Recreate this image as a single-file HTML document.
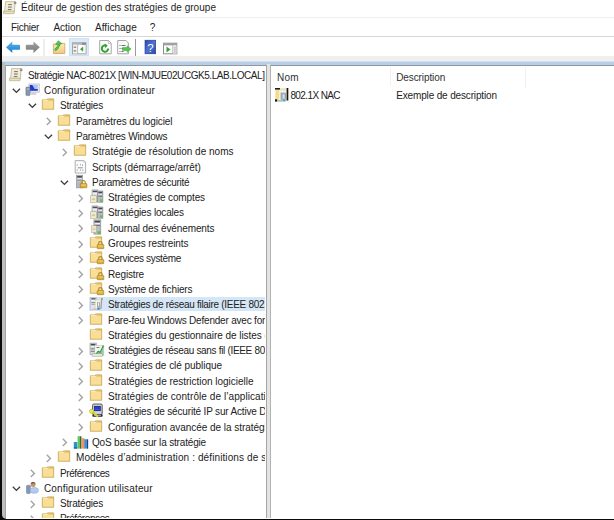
<!DOCTYPE html><html><head><meta charset="utf-8"><style>
html,body{margin:0;padding:0;width:614px;height:520px;overflow:hidden;background:#fff}
*{box-sizing:border-box}
body{position:relative;font-family:"Liberation Sans",sans-serif;font-size:10.0px;color:#222}
.a{position:absolute}
.t{position:absolute;white-space:pre;line-height:12px;height:12px}
.ic{position:absolute;line-height:0}
.ic svg{display:block}
</style></head><body>
<div class="a" style="left:0;top:0;width:2px;height:520px;background:#0b0b0b"></div>
<div class="a" style="left:0;top:518.5px;width:614px;height:1.5px;background:#0b0b0b"></div>
<svg class="a" style="left:3px;top:-1px" width="16" height="16" viewBox="0 -13 16 16"><path d="M2.6 -10.4H12.2L11.3 0H1.5Z" fill="#f0ebd4" stroke="#bfb592" stroke-width="0.8"/><path d="M0.6 -0.8H11.4L11 1.7H0.4Z" fill="#e7e0c2" stroke="#b9ae88" stroke-width="0.7"/><circle cx="12.2" cy="-9.1" r="1.3" fill="#8e8e8e"/><path d="M5.2 -7.4H8.8M5 -4.9H8.6M4.8 -2.4H8.4" stroke="#6e6e6e" stroke-width="1"/><path d="M5 -4.9H8.6" stroke="#a8a8a8" stroke-width="1"/></svg>
<div class="t" style="left:21px;top:2.10px;letter-spacing:0.036px;color:#1e1e1e;">Éditeur de gestion des stratégies de groupe</div>
<div class="a" style="left:2px;top:17px;width:612px;height:1px;background:#efefef"></div>
<div class="t" style="left:11px;top:21.50px;letter-spacing:-0.288px;">Fichier</div>
<div class="t" style="left:53.4px;top:21.50px;letter-spacing:-0.033px;">Action</div>
<div class="t" style="left:95px;top:21.50px;letter-spacing:0.032px;">Affichage</div>
<div class="t" style="left:149.7px;top:21.50px;letter-spacing:-1.662px;">?</div>
<div class="a" style="left:2px;top:36px;width:612px;height:1px;background:#d6d6d6"></div>
<div class="a" style="left:69px;top:38px;width:20px;height:18px;background:#d9eaf9;border:1px solid #cde3f6"></div>
<svg class="a" style="left:0;top:37px" width="200" height="19" viewBox="0 37 200 19">
<defs>
<linearGradient id="gb" x1="0" y1="0" x2="0" y2="1"><stop offset="0" stop-color="#5ab8ee"/><stop offset="1" stop-color="#1b78cc"/></linearGradient>
<linearGradient id="gg" x1="0" y1="0" x2="0" y2="1"><stop offset="0" stop-color="#a0a0a0"/><stop offset="1" stop-color="#7c7c7c"/></linearGradient>
<linearGradient id="gf" x1="0" y1="0" x2="0" y2="1"><stop offset="0" stop-color="#f9eeb0"/><stop offset="1" stop-color="#f2c886"/></linearGradient>
<linearGradient id="gh" x1="0" y1="0" x2="1" y2="1"><stop offset="0" stop-color="#2a48a8"/><stop offset="0.5" stop-color="#4d73d6"/><stop offset="1" stop-color="#2a45a0"/></linearGradient>
</defs>
<path d="M6 47.3L12.3 41.6V44.8H19.2Q20 44.8 20 45.6V48.9Q20 49.7 19.2 49.7H12.3V53Z" fill="url(#gb)"/>
<path d="M39.8 47.3L33.5 41.6V44.8H26.6Q25.8 44.8 25.8 45.6V48.9Q25.8 49.7 26.6 49.7H33.5V53Z" fill="url(#gg)"/>
<rect x="43.5" y="39" width="1" height="17" fill="#dedede"/>
<path d="M53.4 44H60.5L61.3 43.4H64.8V53.5H53.4Z" fill="url(#gf)" stroke="#c6a65e" stroke-width="0.8"/>
<path d="M54.9 50.3Q57.6 48.6 59.4 44.3" fill="none" stroke="#2f9a2f" stroke-width="2.3"/>
<path d="M54.9 50.3Q57.6 48.6 59.4 44.3" fill="none" stroke="#5ad05a" stroke-width="1.2"/>
<path d="M55.6 44.6L58.3 40.8L62 43.8Z" fill="#55cc55" stroke="#2f9a2f" stroke-width="0.6"/>
<rect x="72.5" y="42.8" width="13.5" height="11" fill="#fff" stroke="#9c9c9c" stroke-width="0.9"/>
<rect x="72.5" y="42.8" width="13.5" height="2" fill="#b4b4b4"/>
<rect x="82" y="42.8" width="4" height="2" fill="#8a8a8a"/>
<rect x="73" y="44.8" width="4.3" height="8.6" fill="#f2f2f2"/>
<rect x="73.6" y="46.4" width="2.6" height="1.6" fill="#9a9a9a"/>
<rect x="73.6" y="50" width="2.6" height="1.6" fill="#9a9a9a"/>
<rect x="77.3" y="44.8" width="0.8" height="8.6" fill="#a8a8a8"/>
<path d="M83.2 46.6L80 49.2L83.2 51.8Z" fill="#3aa33a"/>
<rect x="84.8" y="44.8" width="0.9" height="8.6" fill="#f1d3e2"/>
<path d="M99.7 40.5H108.5L111.2 43.2V53.8H99.7Z" fill="#fff" stroke="#a6a6a6" stroke-width="1"/>
<path d="M108.3 40.5V43.4H111.2" fill="none" stroke="#b8b8b8" stroke-width="0.8"/>
<path d="M108.2 48.6A3.2 3.2 0 1 1 106.3 45.6" fill="none" stroke="#2fa32f" stroke-width="2"/>
<path d="M104.6 43.6L107.8 45.7L105 47.9Z" fill="#2fa32f"/>
<path d="M117.7 40.5H126L128.4 43V53.8H117.7Z" fill="#fafafa" stroke="#a6a6a6" stroke-width="1"/>
<path d="M119.5 45.5h1M121.5 45.5h4M119.5 48.5h1M121.5 48.5h2M119.5 51.5h1M121.5 51.5h2" stroke="#707070" stroke-width="1"/>
<path d="M122.5 47.6H127.2V45.8L131 49L127.2 52.2V50.4H122.5Z" fill="#55c84a" stroke="#3a9a3a" stroke-width="0.5"/>
<rect x="135" y="39" width="1" height="17" fill="#9a9a9a"/>
<rect x="145" y="40.2" width="10.7" height="13.6" fill="url(#gh)" stroke="#1f3a90" stroke-width="0.6"/>
<text x="150.4" y="51.8" font-family="Liberation Sans" font-size="11.5" fill="#fff" text-anchor="middle">?</text>
<rect x="163.5" y="43.2" width="13.3" height="10.6" fill="#fff" stroke="#8e8e8e" stroke-width="1"/>
<rect x="163.5" y="43.2" width="13.3" height="2.2" fill="#a0a0a0"/>
<path d="M166.5 46.5L170.5 49.5L166.5 52.5Z" fill="#3aa03a"/>
<rect x="172.5" y="45.4" width="0.8" height="8.2" fill="#9a9a9a"/>
<rect x="173.3" y="45.4" width="3.2" height="8.2" fill="#e6e6e6"/>
<path d="M174.9 47.5v0.8M174.9 49.5v0.8M174.9 51.5v0.8" stroke="#666" stroke-width="0.9"/>
</svg>
<div class="a" style="left:2px;top:56px;width:612px;height:5px;background:#efefef"></div>
<div class="a" style="left:2px;top:61px;width:612px;height:1px;background:#d3e2ef"></div>
<div class="a" style="left:5px;top:62px;width:609px;height:3px;background:#b6cee6"></div>
<div class="a" style="left:5px;top:65px;width:609px;height:1px;background:#8e98a3"></div>
<div class="a" style="left:2px;top:62px;width:3px;height:456px;background:#bdbdbd"></div>
<div class="a" style="left:5px;top:65px;width:1px;height:453px;background:#a2a2a2"></div>
<div class="a" style="left:266px;top:65px;width:1px;height:453px;background:#a6a6a6"></div>
<div class="a" style="left:267px;top:64px;width:3px;height:454px;background:#e3e3e3"></div>
<div class="a" style="left:270px;top:65px;width:1px;height:453px;background:#b3b3b3"></div>
<div class="a" style="left:6px;top:66px;width:259px;height:452px;overflow:hidden">
<svg class="a" style="left:3px;top:-0.20px" width="16" height="16" viewBox="0 -13 16 16"><path d="M2.6 -10.4H12.2L11.3 0H1.5Z" fill="#f0ebd4" stroke="#bfb592" stroke-width="0.8"/><path d="M0.6 -0.8H11.4L11 1.7H0.4Z" fill="#e7e0c2" stroke="#b9ae88" stroke-width="0.7"/><circle cx="12.2" cy="-9.1" r="1.3" fill="#8e8e8e"/><path d="M5.2 -7.4H8.8M5 -4.9H8.6M4.8 -2.4H8.4" stroke="#6e6e6e" stroke-width="1"/><path d="M5 -4.9H8.6" stroke="#a8a8a8" stroke-width="1"/></svg>
<div class="t" style="left:22px;top:3.70px;letter-spacing:-0.443px;">Stratégie NAC-8021X [WIN-MJUE02UCGK5.LAB.LOCAL]</div>
<svg class="a" style="left:6.1px;top:21.8px" width="9" height="6" viewBox="0 0 9 6"><path d="M0.8 0.8L4.4 4.4L8 0.8" fill="none" stroke="#3c3c3c" stroke-width="1.35"/></svg>
<svg class="a" style="left:19px;top:15.10px" width="16" height="16" viewBox="0 -13 16 16"><rect x="3.9" y="-10.1" width="10.4" height="8.4" fill="#dfe3e8" stroke="#b5bcc4" stroke-width="0.6"/><rect x="4.8" y="-9.1" width="7.9" height="5.9" fill="#a9c6f5"/><path d="M4.8 -9.1H7.3L9.6 -5H12.7V-3.2H4.8Z" fill="#2836c4"/><path d="M6.1 -1.7H11.3V0.9H6.1Z" fill="#d9cfd9"/><rect x="0.9" y="-6.9" width="4.2" height="8.5" rx="0.8" fill="#8696ad" stroke="#617088" stroke-width="0.5"/><rect x="1.8" y="-5.4" width="2.4" height="0.8" fill="#c8d2e0"/></svg>
<div class="t" style="left:38px;top:19.00px;letter-spacing:0.154px;">Configuration ordinateur</div>
<svg class="a" style="left:22.1px;top:37.1px" width="9" height="6" viewBox="0 0 9 6"><path d="M0.8 0.8L4.4 4.4L8 0.8" fill="none" stroke="#3c3c3c" stroke-width="1.35"/></svg>
<svg class="a" style="left:35px;top:30.40px" width="16" height="16" viewBox="0 -13 16 16"><path d="M6.6 -10.2H12.6V-8.2H6.6Z" fill="#efd48a" stroke="#cfad5c" stroke-width="0.8"/><rect x="1.3" y="-9.1" width="11.4" height="9.3" fill="#f8de97" stroke="#cdab58" stroke-width="0.9"/><path d="M1.9 -8.5H6.8L7.6 -9.4" fill="none" stroke="#fcefc6" stroke-width="0.8"/></svg>
<div class="t" style="left:54px;top:34.30px;letter-spacing:-0.203px;">Stratégies</div>
<svg class="a" style="left:40.3px;top:51.1px" width="6" height="9" viewBox="0 0 6 9"><path d="M0.8 0.8L4.4 4.4L0.8 8" fill="none" stroke="#a2a2a2" stroke-width="1.35"/></svg>
<svg class="a" style="left:51px;top:45.70px" width="16" height="16" viewBox="0 -13 16 16"><path d="M6.6 -10.2H12.6V-8.2H6.6Z" fill="#efd48a" stroke="#cfad5c" stroke-width="0.8"/><rect x="1.3" y="-9.1" width="11.4" height="9.3" fill="#f8de97" stroke="#cdab58" stroke-width="0.9"/><path d="M1.9 -8.5H6.8L7.6 -9.4" fill="none" stroke="#fcefc6" stroke-width="0.8"/></svg>
<div class="t" style="left:70px;top:49.60px;letter-spacing:-0.115px;">Paramètres du logiciel</div>
<svg class="a" style="left:38.1px;top:67.7px" width="9" height="6" viewBox="0 0 9 6"><path d="M0.8 0.8L4.4 4.4L8 0.8" fill="none" stroke="#3c3c3c" stroke-width="1.35"/></svg>
<svg class="a" style="left:51px;top:61.00px" width="16" height="16" viewBox="0 -13 16 16"><path d="M6.6 -10.2H12.6V-8.2H6.6Z" fill="#efd48a" stroke="#cfad5c" stroke-width="0.8"/><rect x="1.3" y="-9.1" width="11.4" height="9.3" fill="#f8de97" stroke="#cdab58" stroke-width="0.9"/><path d="M1.9 -8.5H6.8L7.6 -9.4" fill="none" stroke="#fcefc6" stroke-width="0.8"/></svg>
<div class="t" style="left:70px;top:64.90px;letter-spacing:-0.207px;">Paramètres Windows</div>
<svg class="a" style="left:56.3px;top:81.7px" width="6" height="9" viewBox="0 0 6 9"><path d="M0.8 0.8L4.4 4.4L0.8 8" fill="none" stroke="#a2a2a2" stroke-width="1.35"/></svg>
<svg class="a" style="left:67px;top:76.30px" width="16" height="16" viewBox="0 -13 16 16"><path d="M6.6 -10.2H12.6V-8.2H6.6Z" fill="#efd48a" stroke="#cfad5c" stroke-width="0.8"/><rect x="1.3" y="-9.1" width="11.4" height="9.3" fill="#f8de97" stroke="#cdab58" stroke-width="0.9"/><path d="M1.9 -8.5H6.8L7.6 -9.4" fill="none" stroke="#fcefc6" stroke-width="0.8"/></svg>
<div class="t" style="left:86px;top:80.20px;letter-spacing:0.010px;">Stratégie de résolution de noms</div>
<svg class="a" style="left:67px;top:91.60px" width="16" height="16" viewBox="0 -13 16 16"><path d="M2.2 -10.4H11L12.6 -8.8V2H2.2Z" fill="#fbfbfb" stroke="#a3a6aa" stroke-width="0.9"/><path d="M10.8 -10.4V-8.6H12.6" fill="none" stroke="#c0c2c5" stroke-width="0.7"/><path d="M4.2 -6.5V-5.3M7 -6.2H8M9.5 -6.5V-5.3M4.8 -3.2H9.8M4.2 -1.5V-0.3M7 -1H8M9.8 -1.5V-0.3" stroke="#8c8f93" stroke-width="1"/></svg>
<div class="t" style="left:86px;top:95.50px;letter-spacing:-0.124px;">Scripts (démarrage/arrêt)</div>
<svg class="a" style="left:54.1px;top:113.6px" width="9" height="6" viewBox="0 0 9 6"><path d="M0.8 0.8L4.4 4.4L8 0.8" fill="none" stroke="#3c3c3c" stroke-width="1.35"/></svg>
<svg class="a" style="left:67px;top:106.90px" width="16" height="16" viewBox="0 -13 16 16"><rect x="3.4" y="-10.8" width="6.3" height="12.7" fill="#b3b7bb" stroke="#8a8f95" stroke-width="0.6"/><rect x="4.2" y="-10" width="4.7" height="1.6" fill="#4a4d52"/><rect x="4.2" y="-7.8" width="4.7" height="1" fill="#f4f4f4"/><rect x="4.2" y="-6.2" width="4.7" height="0.8" fill="#8c9096"/><rect x="4.2" y="-4.6" width="4.7" height="0.8" fill="#c9ccd0"/><path d="M8.7 -2.3V-3.6A1.8 1.8 0 0 1 12.3 -3.6V-2.3" fill="none" stroke="#b28a2a" stroke-width="1.1"/><rect x="7.3" y="-2.4" width="6.6" height="4.1" rx="0.5" fill="#dcae3c" stroke="#a57a1c" stroke-width="0.6"/><rect x="8.3" y="-1.6" width="4.6" height="1.2" fill="#f0d070"/></svg>
<div class="t" style="left:86px;top:110.80px;letter-spacing:-0.281px;">Paramètres de sécurité</div>
<svg class="a" style="left:72.3px;top:127.6px" width="6" height="9" viewBox="0 0 6 9"><path d="M0.8 0.8L4.4 4.4L0.8 8" fill="none" stroke="#a2a2a2" stroke-width="1.35"/></svg>
<svg class="a" style="left:83px;top:122.20px" width="16" height="16" viewBox="0 -13 16 16"><rect x="3" y="-11.1" width="5.9" height="11.8" fill="#dadcdf" stroke="#8d9298" stroke-width="0.6"/><rect x="3.7" y="-10.3" width="4.5" height="1.5" fill="#4a4d52"/><rect x="3.7" y="-8.2" width="4.5" height="0.9" fill="#fafafa"/><rect x="8.7" y="-10" width="5.2" height="11.2" fill="#b7bbc0" stroke="#7e838a" stroke-width="0.6"/><rect x="9.4" y="-9.2" width="3.8" height="1.4" fill="#44474c"/><rect x="9.4" y="-7.2" width="3.8" height="0.9" fill="#eef0f2"/><rect x="9.4" y="-5.2" width="3.8" height="0.8" fill="#5c6068"/><rect x="1.7" y="-5.3" width="5.7" height="7.1" fill="#efe9cf" stroke="#b3ab8a" stroke-width="0.6"/><rect x="3" y="-2.5" width="3" height="1.6" fill="#cfc59c"/><rect x="11" y="-1.7" width="2.6" height="2.5" fill="#66bb55"/></svg>
<div class="t" style="left:102px;top:126.10px;letter-spacing:-0.119px;">Stratégies de comptes</div>
<svg class="a" style="left:72.3px;top:142.9px" width="6" height="9" viewBox="0 0 6 9"><path d="M0.8 0.8L4.4 4.4L0.8 8" fill="none" stroke="#a2a2a2" stroke-width="1.35"/></svg>
<svg class="a" style="left:83px;top:137.50px" width="16" height="16" viewBox="0 -13 16 16"><rect x="3" y="-11.1" width="5.9" height="11.8" fill="#dadcdf" stroke="#8d9298" stroke-width="0.6"/><rect x="3.7" y="-10.3" width="4.5" height="1.5" fill="#4a4d52"/><rect x="3.7" y="-8.2" width="4.5" height="0.9" fill="#fafafa"/><rect x="8.7" y="-10" width="5.2" height="11.2" fill="#b7bbc0" stroke="#7e838a" stroke-width="0.6"/><rect x="9.4" y="-9.2" width="3.8" height="1.4" fill="#44474c"/><rect x="9.4" y="-7.2" width="3.8" height="0.9" fill="#eef0f2"/><rect x="9.4" y="-5.2" width="3.8" height="0.8" fill="#5c6068"/><rect x="1.7" y="-5.3" width="5.7" height="7.1" fill="#efe9cf" stroke="#b3ab8a" stroke-width="0.6"/><rect x="3" y="-2.5" width="3" height="1.6" fill="#cfc59c"/><rect x="11" y="-1.7" width="2.6" height="2.5" fill="#66bb55"/></svg>
<div class="t" style="left:102px;top:141.40px;letter-spacing:-0.174px;">Stratégies locales</div>
<svg class="a" style="left:72.3px;top:158.2px" width="6" height="9" viewBox="0 0 6 9"><path d="M0.8 0.8L4.4 4.4L0.8 8" fill="none" stroke="#a2a2a2" stroke-width="1.35"/></svg>
<svg class="a" style="left:83px;top:152.80px" width="16" height="16" viewBox="0 -13 16 16"><rect x="4.9" y="-12.1" width="6.9" height="14.2" fill="#babec3" stroke="#7e838a" stroke-width="0.6"/><rect x="5.7" y="-11.2" width="5.3" height="1.6" fill="#44474c"/><rect x="5.7" y="-9" width="5.3" height="0.9" fill="#f4f4f4"/><rect x="5.7" y="-7" width="5.3" height="0.8" fill="#5c6068"/><rect x="2.6" y="-6.2" width="4.8" height="6.6" fill="#efe9cf" stroke="#b3ab8a" stroke-width="0.6"/><rect x="3.6" y="-3.5" width="2.8" height="1.4" fill="#cfc59c"/><rect x="8.5" y="-0.8" width="3" height="2.9" fill="#66bb55"/></svg>
<div class="t" style="left:102px;top:156.70px;letter-spacing:-0.121px;">Journal des événements</div>
<svg class="a" style="left:72.3px;top:173.5px" width="6" height="9" viewBox="0 0 6 9"><path d="M0.8 0.8L4.4 4.4L0.8 8" fill="none" stroke="#a2a2a2" stroke-width="1.35"/></svg>
<svg class="a" style="left:83px;top:168.10px" width="16" height="16" viewBox="0 -13 16 16"><path d="M6.6 -10.2H12.6V-8.2H6.6Z" fill="#efd48a" stroke="#cfad5c" stroke-width="0.8"/><rect x="1.3" y="-9.1" width="11.4" height="9.3" fill="#f8de97" stroke="#cdab58" stroke-width="0.9"/><path d="M1.9 -8.5H6.8L7.6 -9.4" fill="none" stroke="#fcefc6" stroke-width="0.8"/><path d="M9.6 -2.3V-3.6A1.8 1.8 0 0 1 13.2 -3.6V-2.3" fill="none" stroke="#b28a2a" stroke-width="1.1"/><rect x="8.2" y="-2.4" width="6.6" height="4.1" rx="0.5" fill="#dcae3c" stroke="#a57a1c" stroke-width="0.6"/><rect x="9.2" y="-1.6" width="4.6" height="1.2" fill="#f0d070"/></svg>
<div class="t" style="left:102px;top:172.00px;letter-spacing:-0.109px;">Groupes restreints</div>
<svg class="a" style="left:72.3px;top:188.8px" width="6" height="9" viewBox="0 0 6 9"><path d="M0.8 0.8L4.4 4.4L0.8 8" fill="none" stroke="#a2a2a2" stroke-width="1.35"/></svg>
<svg class="a" style="left:83px;top:183.40px" width="16" height="16" viewBox="0 -13 16 16"><path d="M6.6 -10.2H12.6V-8.2H6.6Z" fill="#efd48a" stroke="#cfad5c" stroke-width="0.8"/><rect x="1.3" y="-9.1" width="11.4" height="9.3" fill="#f8de97" stroke="#cdab58" stroke-width="0.9"/><path d="M1.9 -8.5H6.8L7.6 -9.4" fill="none" stroke="#fcefc6" stroke-width="0.8"/><path d="M9.6 -2.3V-3.6A1.8 1.8 0 0 1 13.2 -3.6V-2.3" fill="none" stroke="#b28a2a" stroke-width="1.1"/><rect x="8.2" y="-2.4" width="6.6" height="4.1" rx="0.5" fill="#dcae3c" stroke="#a57a1c" stroke-width="0.6"/><rect x="9.2" y="-1.6" width="4.6" height="1.2" fill="#f0d070"/></svg>
<div class="t" style="left:102px;top:187.30px;letter-spacing:-0.335px;">Services système</div>
<svg class="a" style="left:72.3px;top:204.1px" width="6" height="9" viewBox="0 0 6 9"><path d="M0.8 0.8L4.4 4.4L0.8 8" fill="none" stroke="#a2a2a2" stroke-width="1.35"/></svg>
<svg class="a" style="left:83px;top:198.70px" width="16" height="16" viewBox="0 -13 16 16"><path d="M6.6 -10.2H12.6V-8.2H6.6Z" fill="#efd48a" stroke="#cfad5c" stroke-width="0.8"/><rect x="1.3" y="-9.1" width="11.4" height="9.3" fill="#f8de97" stroke="#cdab58" stroke-width="0.9"/><path d="M1.9 -8.5H6.8L7.6 -9.4" fill="none" stroke="#fcefc6" stroke-width="0.8"/><path d="M9.6 -2.3V-3.6A1.8 1.8 0 0 1 13.2 -3.6V-2.3" fill="none" stroke="#b28a2a" stroke-width="1.1"/><rect x="8.2" y="-2.4" width="6.6" height="4.1" rx="0.5" fill="#dcae3c" stroke="#a57a1c" stroke-width="0.6"/><rect x="9.2" y="-1.6" width="4.6" height="1.2" fill="#f0d070"/></svg>
<div class="t" style="left:102px;top:202.60px;letter-spacing:-0.156px;">Registre</div>
<svg class="a" style="left:72.3px;top:219.4px" width="6" height="9" viewBox="0 0 6 9"><path d="M0.8 0.8L4.4 4.4L0.8 8" fill="none" stroke="#a2a2a2" stroke-width="1.35"/></svg>
<svg class="a" style="left:83px;top:214.00px" width="16" height="16" viewBox="0 -13 16 16"><path d="M6.6 -10.2H12.6V-8.2H6.6Z" fill="#efd48a" stroke="#cfad5c" stroke-width="0.8"/><rect x="1.3" y="-9.1" width="11.4" height="9.3" fill="#f8de97" stroke="#cdab58" stroke-width="0.9"/><path d="M1.9 -8.5H6.8L7.6 -9.4" fill="none" stroke="#fcefc6" stroke-width="0.8"/><path d="M9.6 -2.3V-3.6A1.8 1.8 0 0 1 13.2 -3.6V-2.3" fill="none" stroke="#b28a2a" stroke-width="1.1"/><rect x="8.2" y="-2.4" width="6.6" height="4.1" rx="0.5" fill="#dcae3c" stroke="#a57a1c" stroke-width="0.6"/><rect x="9.2" y="-1.6" width="4.6" height="1.2" fill="#f0d070"/></svg>
<div class="t" style="left:102px;top:217.90px;letter-spacing:-0.151px;">Système de fichiers</div>
<div class="a" style="left:83px;top:230.70px;width:177px;height:14.8px;background:#d5e6f6"></div>
<svg class="a" style="left:72.3px;top:234.7px" width="6" height="9" viewBox="0 0 6 9"><path d="M0.8 0.8L4.4 4.4L0.8 8" fill="none" stroke="#a2a2a2" stroke-width="1.35"/></svg>
<svg class="a" style="left:83px;top:229.30px" width="16" height="16" viewBox="0 -13 16 16"><rect x="1.5" y="-10.5" width="6" height="12" fill="#dfe4ea" stroke="#aab4bf" stroke-width="0.5"/><rect x="2.3" y="-9.8" width="4.3" height="1.3" fill="#4e5258"/><rect x="2.3" y="-7.8" width="4.3" height="0.9" fill="#fafafa"/><rect x="2.3" y="-6" width="4.3" height="0.8" fill="#7a7e84"/><rect x="2.3" y="-4.2" width="4.3" height="0.8" fill="#8a8e94"/><rect x="6.2" y="-8" width="5.8" height="9" fill="#f8f5e2" stroke="#d6cfb0" stroke-width="0.5"/><rect x="8" y="-5.8" width="3" height="5.4" fill="#a3adb6"/><rect x="9" y="-5" width="1" height="3" fill="#e8eef4"/><rect x="4.5" y="0.3" width="3" height="1.3" fill="#f0b494"/><rect x="8.3" y="-0.3" width="2.4" height="2.1" fill="#3b8db2"/><path d="M12.8 -9.5L11.8 1" stroke="#9aa0a8" stroke-width="1.3"/><circle cx="13" cy="-9.3" r="0.9" fill="#b08a94"/></svg>
<div class="t" style="left:102px;top:233.20px;letter-spacing:-0.290px;">Stratégies de réseau filaire (IEEE 802.3)</div>
<svg class="a" style="left:72.3px;top:250.0px" width="6" height="9" viewBox="0 0 6 9"><path d="M0.8 0.8L4.4 4.4L0.8 8" fill="none" stroke="#a2a2a2" stroke-width="1.35"/></svg>
<svg class="a" style="left:83px;top:244.60px" width="16" height="16" viewBox="0 -13 16 16"><path d="M6.6 -10.2H12.6V-8.2H6.6Z" fill="#efd48a" stroke="#cfad5c" stroke-width="0.8"/><rect x="1.3" y="-9.1" width="11.4" height="9.3" fill="#f8de97" stroke="#cdab58" stroke-width="0.9"/><path d="M1.9 -8.5H6.8L7.6 -9.4" fill="none" stroke="#fcefc6" stroke-width="0.8"/></svg>
<div class="t" style="left:102px;top:248.50px;letter-spacing:-0.201px;">Pare-feu Windows Defender avec fonctions avancées de sécurité</div>
<svg class="a" style="left:83px;top:259.90px" width="16" height="16" viewBox="0 -13 16 16"><path d="M6.6 -10.2H12.6V-8.2H6.6Z" fill="#efd48a" stroke="#cfad5c" stroke-width="0.8"/><rect x="1.3" y="-9.1" width="11.4" height="9.3" fill="#f8de97" stroke="#cdab58" stroke-width="0.9"/><path d="M1.9 -8.5H6.8L7.6 -9.4" fill="none" stroke="#fcefc6" stroke-width="0.8"/></svg>
<div class="t" style="left:102px;top:263.80px;letter-spacing:-0.054px;">Stratégies du gestionnaire de listes de réseaux</div>
<svg class="a" style="left:72.3px;top:280.6px" width="6" height="9" viewBox="0 0 6 9"><path d="M0.8 0.8L4.4 4.4L0.8 8" fill="none" stroke="#a2a2a2" stroke-width="1.35"/></svg>
<svg class="a" style="left:83px;top:275.20px" width="16" height="16" viewBox="0 -13 16 16"><rect x="1" y="-10.9" width="6.3" height="11.4" fill="#d8dbde" stroke="#8d9298" stroke-width="0.6"/><rect x="1.8" y="-10.1" width="4.6" height="1.5" fill="#44474c"/><rect x="1.8" y="-7.8" width="4.6" height="0.9" fill="#f4f4f4"/><rect x="1.8" y="-5.6" width="4.6" height="0.9" fill="#6a6e74"/><rect x="1.8" y="-3.2" width="4.6" height="0.9" fill="#6a6e74"/><rect x="5.8" y="-8.8" width="9" height="10.3" fill="#f4f7f2" stroke="#9fb0a0" stroke-width="0.5"/><path d="M6.6 1L9.2 -2.6L11.2 -1.4L14.4 -8.2" fill="none" stroke="#2f8f48" stroke-width="1.4"/><path d="M6.6 1.5L9.2 -2.1L11.2 -0.9L14.4 -7.5V1.5Z" fill="#7cc58c" opacity="0.8"/><path d="M7.5 -6.5H10.5" stroke="#666" stroke-width="0.9"/><rect x="3" y="-0.2" width="10.5" height="2.4" fill="#e8ead6" stroke="#8f9488" stroke-width="0.5"/></svg>
<div class="t" style="left:102px;top:279.10px;letter-spacing:-0.318px;">Stratégies de réseau sans fil (IEEE 802.11)</div>
<svg class="a" style="left:72.3px;top:295.9px" width="6" height="9" viewBox="0 0 6 9"><path d="M0.8 0.8L4.4 4.4L0.8 8" fill="none" stroke="#a2a2a2" stroke-width="1.35"/></svg>
<svg class="a" style="left:83px;top:290.50px" width="16" height="16" viewBox="0 -13 16 16"><path d="M6.6 -10.2H12.6V-8.2H6.6Z" fill="#efd48a" stroke="#cfad5c" stroke-width="0.8"/><rect x="1.3" y="-9.1" width="11.4" height="9.3" fill="#f8de97" stroke="#cdab58" stroke-width="0.9"/><path d="M1.9 -8.5H6.8L7.6 -9.4" fill="none" stroke="#fcefc6" stroke-width="0.8"/></svg>
<div class="t" style="left:102px;top:294.40px;letter-spacing:-0.041px;">Stratégies de clé publique</div>
<svg class="a" style="left:72.3px;top:311.2px" width="6" height="9" viewBox="0 0 6 9"><path d="M0.8 0.8L4.4 4.4L0.8 8" fill="none" stroke="#a2a2a2" stroke-width="1.35"/></svg>
<svg class="a" style="left:83px;top:305.80px" width="16" height="16" viewBox="0 -13 16 16"><path d="M6.6 -10.2H12.6V-8.2H6.6Z" fill="#efd48a" stroke="#cfad5c" stroke-width="0.8"/><rect x="1.3" y="-9.1" width="11.4" height="9.3" fill="#f8de97" stroke="#cdab58" stroke-width="0.9"/><path d="M1.9 -8.5H6.8L7.6 -9.4" fill="none" stroke="#fcefc6" stroke-width="0.8"/></svg>
<div class="t" style="left:102px;top:309.70px;letter-spacing:-0.019px;">Stratégies de restriction logicielle</div>
<svg class="a" style="left:72.3px;top:326.5px" width="6" height="9" viewBox="0 0 6 9"><path d="M0.8 0.8L4.4 4.4L0.8 8" fill="none" stroke="#a2a2a2" stroke-width="1.35"/></svg>
<svg class="a" style="left:83px;top:321.10px" width="16" height="16" viewBox="0 -13 16 16"><path d="M6.6 -10.2H12.6V-8.2H6.6Z" fill="#efd48a" stroke="#cfad5c" stroke-width="0.8"/><rect x="1.3" y="-9.1" width="11.4" height="9.3" fill="#f8de97" stroke="#cdab58" stroke-width="0.9"/><path d="M1.9 -8.5H6.8L7.6 -9.4" fill="none" stroke="#fcefc6" stroke-width="0.8"/></svg>
<div class="t" style="left:102px;top:325.00px;letter-spacing:0.076px;">Stratégies de contrôle de l’application</div>
<svg class="a" style="left:72.3px;top:341.8px" width="6" height="9" viewBox="0 0 6 9"><path d="M0.8 0.8L4.4 4.4L0.8 8" fill="none" stroke="#a2a2a2" stroke-width="1.35"/></svg>
<svg class="a" style="left:83px;top:336.40px" width="16" height="16" viewBox="0 -13 16 16"><rect x="3.6" y="-11" width="9.6" height="10.5" rx="1.2" fill="#cfd1d6" stroke="#34373f" stroke-width="0.8"/><rect x="5.3" y="-8.8" width="6.2" height="4.6" fill="#1b2bc4" stroke="#0e1660" stroke-width="0.5"/><path d="M5.9 -7H10.9M5.9 -5.5H10.9" stroke="#4d68ee" stroke-width="0.6"/><rect x="3.4" y="-0.8" width="10.2" height="2.5" rx="0.6" fill="#2a2a2e"/><rect x="5" y="-0.3" width="7" height="1" fill="#c8c8c8"/><path d="M3.2 -3.2L9 1.8" stroke="#d5d82a" stroke-width="2"/><circle cx="2.6" cy="-3.7" r="2.1" fill="#e8ee40" stroke="#a6a812" stroke-width="0.5"/></svg>
<div class="t" style="left:102px;top:340.30px;letter-spacing:-0.172px;">Stratégies de sécurité IP sur Active Directory</div>
<svg class="a" style="left:72.3px;top:357.1px" width="6" height="9" viewBox="0 0 6 9"><path d="M0.8 0.8L4.4 4.4L0.8 8" fill="none" stroke="#a2a2a2" stroke-width="1.35"/></svg>
<svg class="a" style="left:83px;top:351.70px" width="16" height="16" viewBox="0 -13 16 16"><path d="M6.6 -10.2H12.6V-8.2H6.6Z" fill="#efd48a" stroke="#cfad5c" stroke-width="0.8"/><rect x="1.3" y="-9.1" width="11.4" height="9.3" fill="#f8de97" stroke="#cdab58" stroke-width="0.9"/><path d="M1.9 -8.5H6.8L7.6 -9.4" fill="none" stroke="#fcefc6" stroke-width="0.8"/></svg>
<div class="t" style="left:102px;top:355.60px;letter-spacing:-0.040px;">Configuration avancée de la stratégie d’audit</div>
<svg class="a" style="left:56.3px;top:372.4px" width="6" height="9" viewBox="0 0 6 9"><path d="M0.8 0.8L4.4 4.4L0.8 8" fill="none" stroke="#a2a2a2" stroke-width="1.35"/></svg>
<svg class="a" style="left:67px;top:367.00px" width="16" height="16" viewBox="0 -13 16 16"><rect x="0.8" y="-4" width="3.6" height="6.6" rx="0.6" fill="#2f8fd0"/><rect x="0.8" y="1.4" width="3.6" height="1.2" fill="#1f5f9a"/><rect x="4.6" y="-9.8" width="3.2" height="12.4" fill="#5ec85e"/><rect x="7.3" y="-9.6" width="1.1" height="12.2" fill="#173f17"/><rect x="8.4" y="-7.8" width="2.5" height="10.4" fill="#f0965e"/><rect x="10.9" y="-7.2" width="0.6" height="9.8" fill="#6a3a28"/><rect x="11.5" y="-6.7" width="3.6" height="9.3" fill="#3e90d6"/><rect x="14.1" y="-6.5" width="1" height="9.1" fill="#1a3f7a"/></svg>
<div class="t" style="left:86px;top:370.90px;letter-spacing:-0.169px;">QoS basée sur la stratégie</div>
<svg class="a" style="left:40.3px;top:387.7px" width="6" height="9" viewBox="0 0 6 9"><path d="M0.8 0.8L4.4 4.4L0.8 8" fill="none" stroke="#a2a2a2" stroke-width="1.35"/></svg>
<svg class="a" style="left:51px;top:382.30px" width="16" height="16" viewBox="0 -13 16 16"><path d="M6.6 -10.2H12.6V-8.2H6.6Z" fill="#efd48a" stroke="#cfad5c" stroke-width="0.8"/><rect x="1.3" y="-9.1" width="11.4" height="9.3" fill="#f8de97" stroke="#cdab58" stroke-width="0.9"/><path d="M1.9 -8.5H6.8L7.6 -9.4" fill="none" stroke="#fcefc6" stroke-width="0.8"/></svg>
<div class="t" style="left:70px;top:386.20px;letter-spacing:0.110px;">Modèles d’administration : définitions de stratégies</div>
<svg class="a" style="left:24.3px;top:403.0px" width="6" height="9" viewBox="0 0 6 9"><path d="M0.8 0.8L4.4 4.4L0.8 8" fill="none" stroke="#a2a2a2" stroke-width="1.35"/></svg>
<svg class="a" style="left:35px;top:397.60px" width="16" height="16" viewBox="0 -13 16 16"><path d="M6.6 -10.2H12.6V-8.2H6.6Z" fill="#efd48a" stroke="#cfad5c" stroke-width="0.8"/><rect x="1.3" y="-9.1" width="11.4" height="9.3" fill="#f8de97" stroke="#cdab58" stroke-width="0.9"/><path d="M1.9 -8.5H6.8L7.6 -9.4" fill="none" stroke="#fcefc6" stroke-width="0.8"/></svg>
<div class="t" style="left:54px;top:401.50px;letter-spacing:-0.411px;">Préférences</div>
<svg class="a" style="left:6.1px;top:419.6px" width="9" height="6" viewBox="0 0 9 6"><path d="M0.8 0.8L4.4 4.4L8 0.8" fill="none" stroke="#3c3c3c" stroke-width="1.35"/></svg>
<svg class="a" style="left:19px;top:412.90px" width="16" height="16" viewBox="0 -13 16 16"><rect x="1.5" y="-6.7" width="3.9" height="8.3" rx="1" fill="#8399b5" stroke="#5d7290" stroke-width="0.5"/><ellipse cx="9.3" cy="-1.6" rx="4.1" ry="2.8" fill="#b2cbee" stroke="#7f9cc6" stroke-width="0.5"/><circle cx="8.1" cy="-7.4" r="2.5" fill="#c29468"/><path d="M5.7 -8A2.5 2.5 0 0 1 10.5 -8.2Q8.5 -9.2 5.7 -8Z" fill="#6d4a2c"/></svg>
<div class="t" style="left:38px;top:416.80px;letter-spacing:0.150px;">Configuration utilisateur</div>
<svg class="a" style="left:24.3px;top:433.6px" width="6" height="9" viewBox="0 0 6 9"><path d="M0.8 0.8L4.4 4.4L0.8 8" fill="none" stroke="#a2a2a2" stroke-width="1.35"/></svg>
<svg class="a" style="left:35px;top:428.20px" width="16" height="16" viewBox="0 -13 16 16"><path d="M6.6 -10.2H12.6V-8.2H6.6Z" fill="#efd48a" stroke="#cfad5c" stroke-width="0.8"/><rect x="1.3" y="-9.1" width="11.4" height="9.3" fill="#f8de97" stroke="#cdab58" stroke-width="0.9"/><path d="M1.9 -8.5H6.8L7.6 -9.4" fill="none" stroke="#fcefc6" stroke-width="0.8"/></svg>
<div class="t" style="left:54px;top:432.10px;letter-spacing:-0.203px;">Stratégies</div>
<svg class="a" style="left:24.3px;top:448.9px" width="6" height="9" viewBox="0 0 6 9"><path d="M0.8 0.8L4.4 4.4L0.8 8" fill="none" stroke="#a2a2a2" stroke-width="1.35"/></svg>
<svg class="a" style="left:35px;top:443.50px" width="16" height="16" viewBox="0 -13 16 16"><path d="M6.6 -10.2H12.6V-8.2H6.6Z" fill="#efd48a" stroke="#cfad5c" stroke-width="0.8"/><rect x="1.3" y="-9.1" width="11.4" height="9.3" fill="#f8de97" stroke="#cdab58" stroke-width="0.9"/><path d="M1.9 -8.5H6.8L7.6 -9.4" fill="none" stroke="#fcefc6" stroke-width="0.8"/></svg>
<div class="t" style="left:54px;top:447.40px;letter-spacing:-0.411px;">Préférences</div>
</div>
<div class="t" style="left:277px;top:71.70px;letter-spacing:0.192px;color:#303030;">Nom</div>
<div class="t" style="left:396.2px;top:71.70px;letter-spacing:-0.094px;color:#303030;">Description</div>
<div class="a" style="left:390px;top:68px;width:1px;height:18px;background:#f1f1f1"></div>
<div class="a" style="left:525px;top:67px;width:1px;height:21px;background:#f1f1f1"></div>
<svg class="a" style="left:270px;top:84px" width="22" height="20" viewBox="270 84 22 20"><rect x="275" y="88" width="13.3" height="13.6" fill="#f4f2ea"/><rect x="275.5" y="89.5" width="3.6" height="10" fill="#f2de88"/><rect x="275" y="88" width="5" height="1.6" fill="#1e1e1e"/><rect x="280" y="88.2" width="6" height="2.6" fill="#e9e6c8"/><rect x="286.6" y="88" width="1.7" height="12.5" fill="#161616"/><rect x="275" y="99.3" width="2.2" height="2.3" fill="#161616"/><rect x="277.2" y="100" width="5.5" height="1.6" fill="#b8bca8"/><rect x="281" y="93" width="4.6" height="6.3" fill="#a9b6c4" stroke="#6f8092" stroke-width="0.5"/><rect x="283.2" y="94.5" width="1.2" height="4" fill="#e6eef6"/><rect x="282.8" y="99.5" width="2.8" height="2" fill="#44aec8"/></svg>
<div class="t" style="left:290.4px;top:89.60px;letter-spacing:-0.599px;">802.1X NAC</div>
<div class="t" style="left:396.2px;top:89.60px;letter-spacing:-0.148px;">Exemple de description</div>
<svg class="a" style="left:0;top:512px" width="8" height="8" viewBox="0 0 8 8"><path d="M0 2.5H2Q2 6.5 6 6.5V8H0Z" fill="#0b0b0b"/></svg>
</body></html>
